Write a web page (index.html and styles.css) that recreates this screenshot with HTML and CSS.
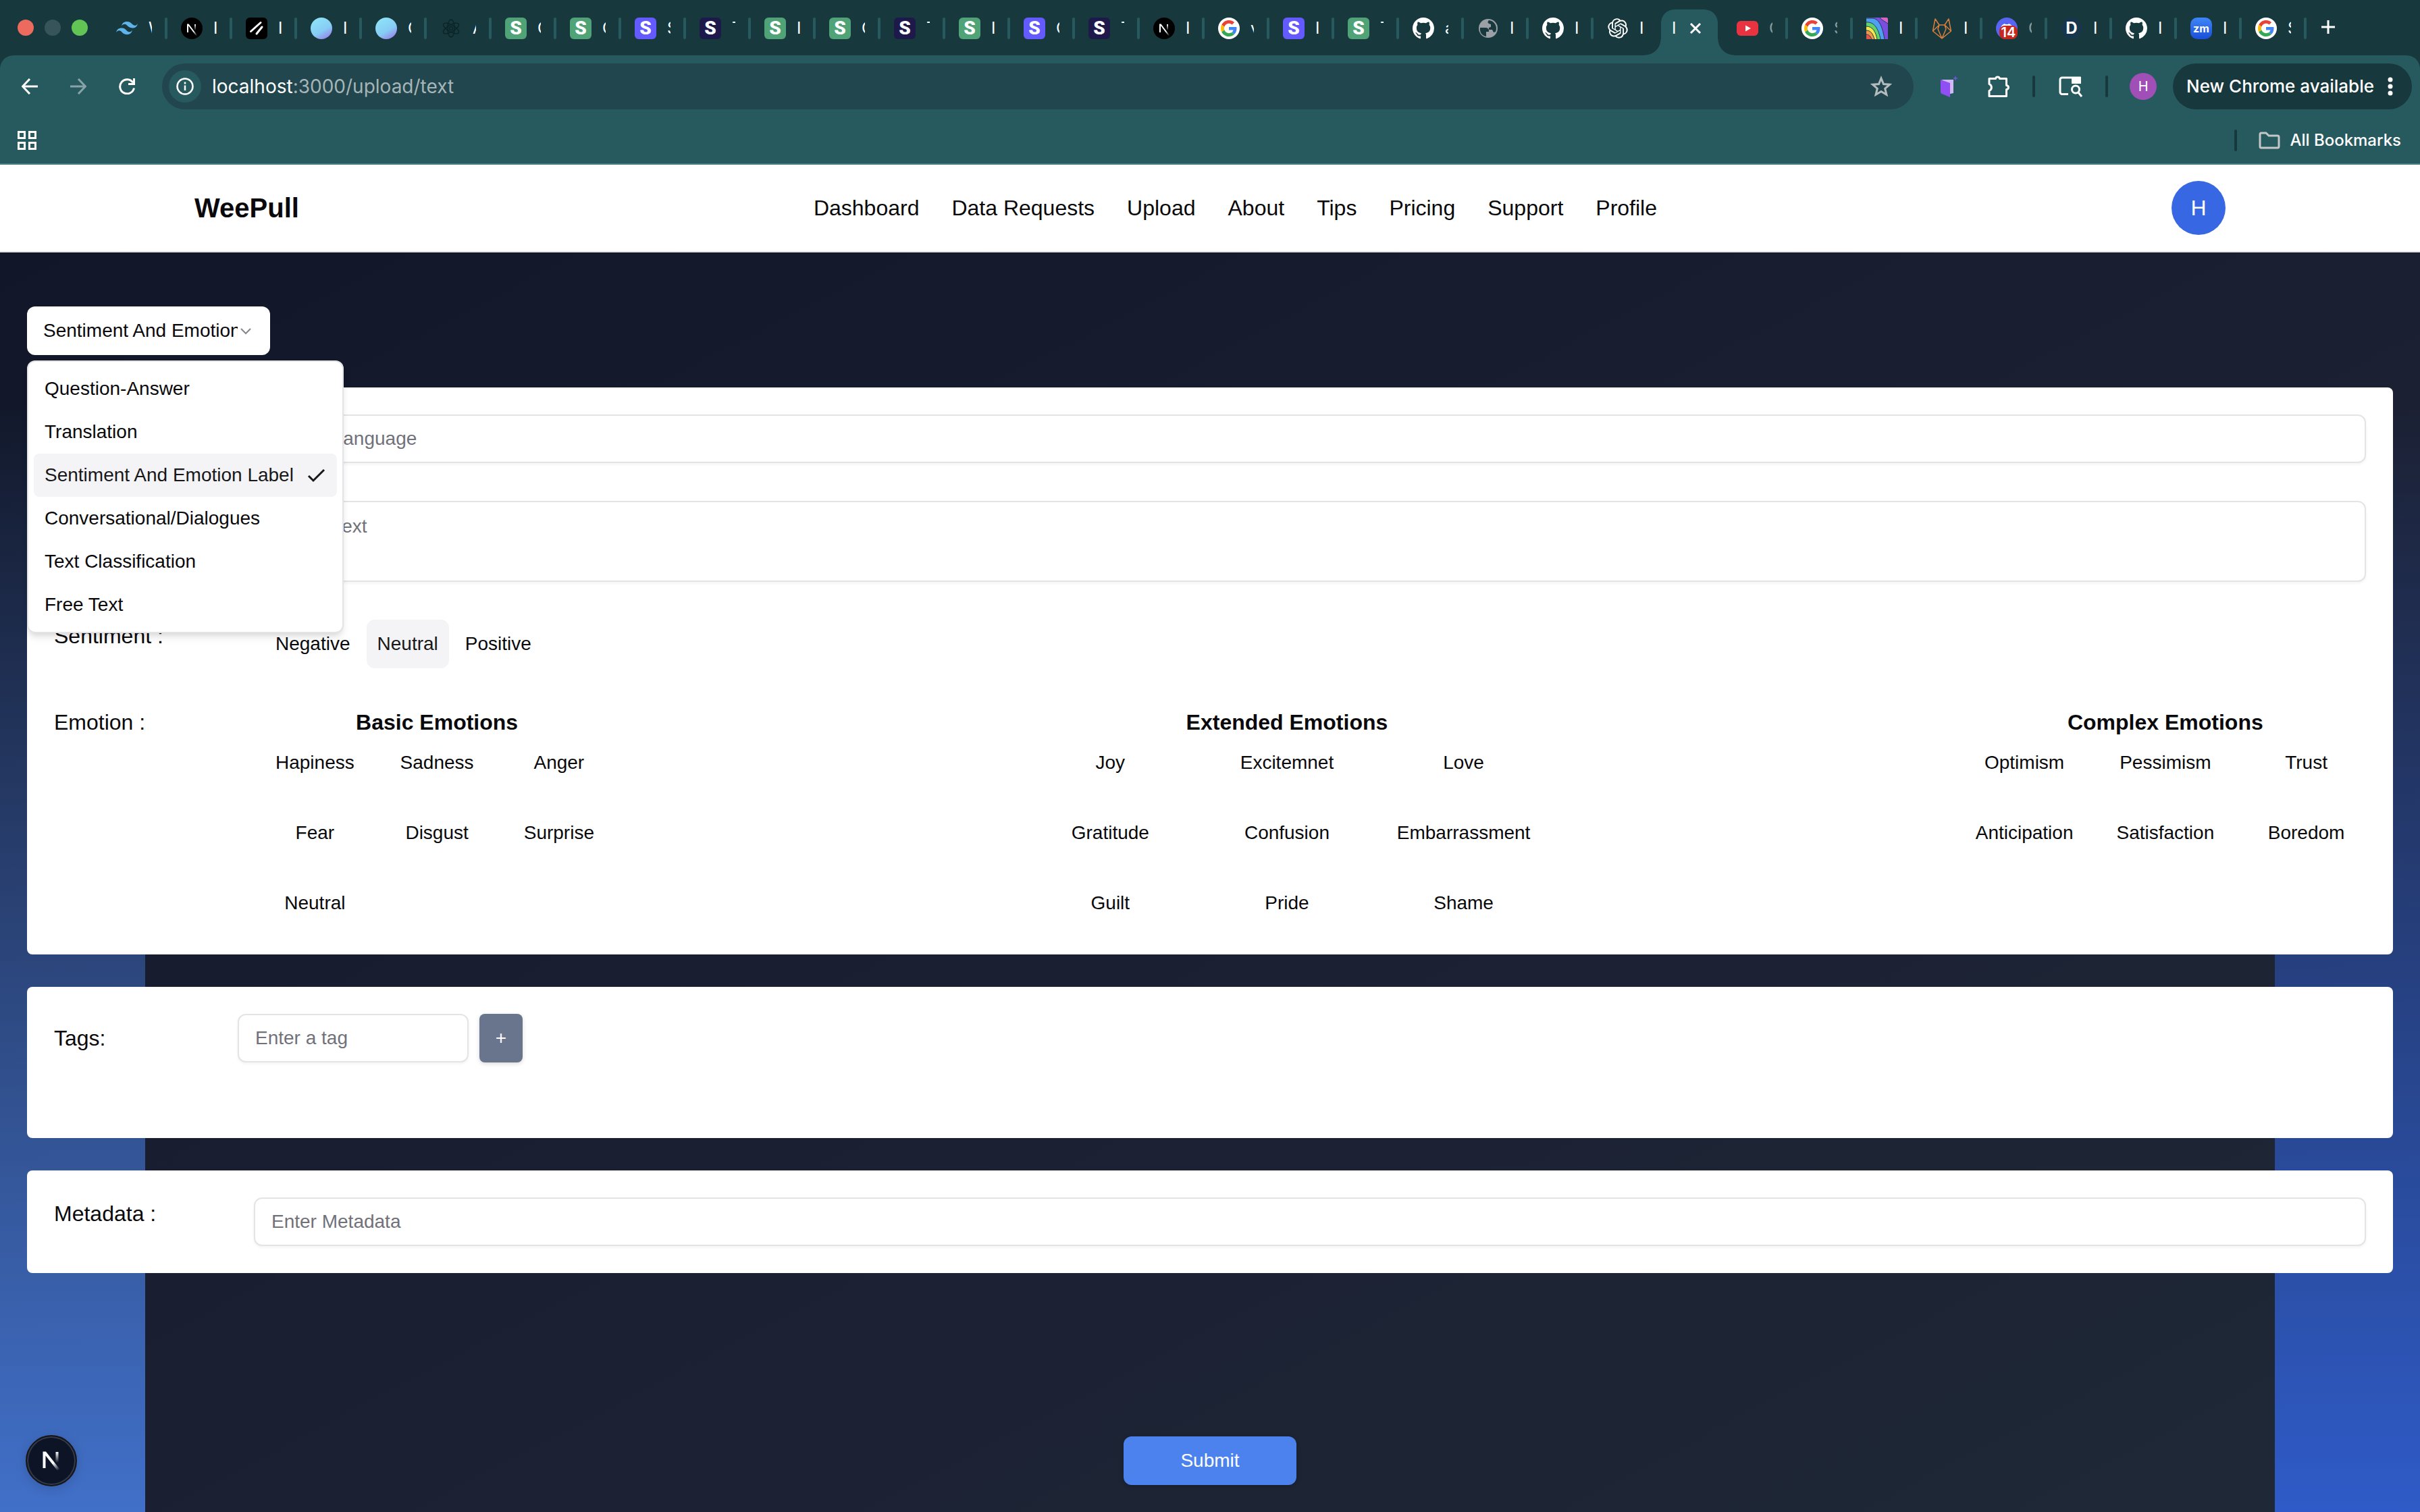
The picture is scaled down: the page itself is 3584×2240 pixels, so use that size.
FILE: index.html
```html
<!DOCTYPE html>
<html lang="en">
<head>
  <meta charset="UTF-8" />
  <meta name="viewport" content="width=device-width, initial-scale=1" />
  <title>WeePull - Upload Text</title>
  <link rel="stylesheet" href="styles.css">
</head>
<body>
  <svg width="0" height="0" class="sprite" aria-hidden="true">
    <defs>
      <linearGradient id="blob-fill" x1="0.2" y1="0" x2="0.8" y2="1">
        <stop offset="0" stop-color="#8fe3f7" />
        <stop offset="0.6" stop-color="#86cdf5" />
        <stop offset="1" stop-color="#9a7fe8" />
      </linearGradient>
      <linearGradient id="n-fade" x1="0" y1="0" x2="0" y2="1">
        <stop offset="0" stop-color="#fff" />
        <stop offset="1" stop-color="#fff" stop-opacity="0" />
      </linearGradient>
      <linearGradient id="n-diag" gradientUnits="userSpaceOnUse" x1="19" y1="20" x2="24" y2="26.500">
        <stop offset="0" stop-color="#fff" />
        <stop offset="1" stop-color="#fff" stop-opacity="0" />
      </linearGradient>
      <linearGradient id="badge-diag" gradientUnits="userSpaceOnUse" x1="19" y1="19" x2="27" y2="30">
        <stop offset="0" stop-color="#fff" />
        <stop offset="1" stop-color="#fff" stop-opacity="0" />
      </linearGradient>
    </defs>
    <symbol id="tailwind" viewBox="0 -10 54 54">
      <path fill="#5fb4ec" d="M27 0c-7.2 0-11.7 3.6-13.5 10.8 2.7-3.6 5.85-4.95 9.45-4.05 2.054.513 3.522 2.004 5.147 3.653C30.744 13.09 33.808 16.2 40.5 16.2c7.2 0 11.7-3.6 13.5-10.8-2.7 3.6-5.85 4.95-9.45 4.05-2.054-.513-3.522-2.004-5.147-3.653C36.756 3.11 33.692 0 27 0zM13.5 16.2C6.3 16.2 1.8 19.8 0 27c2.7-3.6 5.85-4.95 9.45-4.05 2.054.514 3.522 2.004 5.147 3.653C17.244 29.29 20.308 32.4 27 32.4c7.2 0 11.7-3.6 13.5-10.8-2.7 3.6-5.85 4.95-9.45 4.05-2.054-.513-3.522-2.004-5.147-3.653C23.256 19.31 20.192 16.2 13.5 16.2z" />
    </symbol>
    <symbol id="next" viewBox="0 0 32 32">
      <circle cx="16" cy="16" r="16" fill="#000" />
      <path d="M10 22V10.500h1L23.500 27" fill="none" stroke="url(#n-diag)" stroke-width="2" />
      <rect x="20" y="10" width="2" height="9" fill="url(#n-fade)" />
    </symbol>
    <symbol id="slashes" viewBox="0 0 32 32">
      <rect width="32" height="32" rx="6" fill="#000" />
      <path d="M7.500 20.500 22 7.500M16 24l8-10" stroke="#fff" stroke-width="3" stroke-linecap="round" />
    </symbol>
    <symbol id="blob" viewBox="0 0 32 32"><circle cx="16" cy="16" r="16" fill="url(#blob-fill)" /></symbol>
    <symbol id="atom" viewBox="0 0 32 32">
      <g fill="none" stroke="#0c2529" stroke-width="1.500">
        <ellipse cx="16" cy="16" rx="5" ry="13" />
        <ellipse cx="16" cy="16" rx="5" ry="13" transform="rotate(60 16 16)" />
        <ellipse cx="16" cy="16" rx="5" ry="13" transform="rotate(120 16 16)" />
        <circle cx="16" cy="16" r="2.500" />
      </g>
    </symbol>
    <symbol id="google" viewBox="0 0 32 32">
      <circle cx="16" cy="16" r="16" fill="#fff" />
      <g transform="translate(4 4) scale(.5)">
        <path fill="#ea4335" d="M24 9.500c3.540 0 6.710 1.220 9.210 3.600l6.850-6.850C35.900 2.380 30.470 0 24 0 14.620 0 6.510 5.380 2.560 13.220l7.980 6.190C12.430 13.720 17.740 9.500 24 9.500z" />
        <path fill="#4285f4" d="M46.980 24.550c0-1.570-.15-3.090-.38-4.550H24v9.020h12.940c-.58 2.960-2.260 5.480-4.780 7.180l7.730 6c4.510-4.180 7.090-10.360 7.090-17.650z" />
        <path fill="#fbbc05" d="M10.530 28.590c-.48-1.450-.76-2.990-.76-4.590s.27-3.140.76-4.590l-7.980-6.190C.92 16.460 0 20.120 0 24c0 3.880.92 7.540 2.560 10.780l7.970-6.190z" />
        <path fill="#34a853" d="M24 48c6.480 0 11.930-2.130 15.890-5.810l-7.730-6c-2.150 1.450-4.920 2.300-8.160 2.300-6.260 0-11.570-4.220-13.470-9.910l-7.980 6.190C6.510 42.620 14.620 48 24 48z" />
      </g>
    </symbol>
    <symbol id="github" viewBox="0 0 16 16">
      <path fill="#fff" d="M8 0C3.58 0 0 3.58 0 8c0 3.54 2.29 6.53 5.47 7.59.4.07.55-.17.55-.38 0-.19-.01-.82-.01-1.49-2.01.37-2.53-.49-2.69-.94-.09-.23-.48-.94-.82-1.13-.28-.15-.68-.52-.01-.53.63-.01 1.08.58 1.23.82.72 1.21 1.87.87 2.33.66.07-.52.28-.87.51-1.07-1.78-.2-3.64-.89-3.64-3.95 0-.87.31-1.59.82-2.15-.08-.2-.36-1.02.08-2.12 0 0 .67-.21 2.2.82.64-.18 1.32-.27 2-.27.68 0 1.36.09 2 .27 1.53-1.04 2.2-.82 2.2-.82.44 1.1.16 1.92.08 2.12.51.56.82 1.27.82 2.15 0 3.07-1.87 3.75-3.65 3.95.29.25.54.73.54 1.48 0 1.07-.01 1.93-.01 2.2 0 .21.15.46.55.38A8.013 8.013 0 0016 8c0-4.42-3.58-8-8-8z" />
    </symbol>
    <symbol id="globe" viewBox="0 0 32 32">
      <circle cx="16" cy="16" r="14" fill="#9aa0a6" />
      <path fill="#17383c" d="M4 15h8c3 0 5 2 5 4v2h-4v7c-6-1-10-6-9-13zM17 4c-2 2-2 4 0 5l3 1v4l-3 1v3h5l2 4 3-1c3-7-1-16-10-17z" />
    </symbol>
    <symbol id="openai" viewBox="-1 -1 26 26">
      <path fill="#fff" d="M22.2819 9.8211a5.9847 5.9847 0 0 0-.5157-4.9108 6.0462 6.0462 0 0 0-6.5098-2.9A6.0651 6.0651 0 0 0 4.9807 4.1818a5.9847 5.9847 0 0 0-3.9977 2.9 6.0462 6.0462 0 0 0 .7427 7.0966 5.98 5.98 0 0 0 .511 4.9107 6.051 6.051 0 0 0 6.5146 2.9001A5.9847 5.9847 0 0 0 13.2599 24a6.0557 6.0557 0 0 0 5.7718-4.2058 5.9894 5.9894 0 0 0 3.9977-2.9001 6.0557 6.0557 0 0 0-.7475-7.0729zm-9.022 12.6081a4.4755 4.4755 0 0 1-2.8764-1.0408l.1419-.0804 4.7783-2.7582a.7948.7948 0 0 0 .3927-.6813v-6.7369l2.02 1.1686a.071.071 0 0 1 .038.052v5.5826a4.504 4.504 0 0 1-4.4945 4.4944zm-9.6607-4.1254a4.4708 4.4708 0 0 1-.5346-3.0137l.142.0852 4.783 2.7582a.7712.7712 0 0 0 .7806 0l5.8428-3.3685v2.3324a.0804.0804 0 0 1-.0332.0615L9.74 19.9502a4.4992 4.4992 0 0 1-6.1408-1.6464zM2.3408 7.8956a4.485 4.485 0 0 1 2.3655-1.9728V11.6a.7664.7664 0 0 0 .3879.6765l5.8144 3.3543-2.0201 1.1685a.0757.0757 0 0 1-.071 0l-4.8303-2.7865A4.504 4.504 0 0 1 2.3408 7.8956zm16.5963 3.8558L13.1038 8.364 15.1192 7.2a.0757.0757 0 0 1 .071 0l4.8303 2.7913a4.4944 4.4944 0 0 1-.6765 8.1042v-5.6772a.79.79 0 0 0-.407-.667zm2.0107-3.0231l-.142-.0852-4.7735-2.7818a.7759.7759 0 0 0-.7854 0L9.409 9.2297V6.8974a.0662.0662 0 0 1 .0284-.0615l4.8303-2.7866a4.4992 4.4992 0 0 1 6.6802 4.66zM8.3065 12.863l-2.02-1.1638a.0804.0804 0 0 1-.038-.0567V6.0742a4.4992 4.4992 0 0 1 7.3757-3.4537l-.142.0805L8.704 5.459a.7948.7948 0 0 0-.3927.6813zm1.0976-2.3654l2.602-1.4998 2.6069 1.4998v2.9994l-2.5974 1.4997-2.6067-1.4997Z" />
    </symbol>
    <symbol id="youtube" viewBox="0 0 32 32">
      <rect y="5" width="32" height="22" rx="6" fill="#ea3340" />
      <path d="M13 11.500v9l8-4.500z" fill="#fff" />
    </symbol>
    <symbol id="rainbow" viewBox="0 0 32 32">
      <rect width="32" height="32" rx="2" fill="#d466c8" />
      <path fill="#7a4fe0" d="M0 0h20c3 4 8 6 12 9v23H0z" />
      <path fill="#4fa0ee" d="M0 1h10c10 2 14 14 17 31H0z" />
      <path fill="#62d36a" d="M0 7c12-1 18 10 21 25H0z" />
      <path fill="#f5e64b" d="M0 13c10 0 14 9 16 19H0z" />
      <path fill="#f0974a" d="M0 19c7 0 10 6 12 13H0z" />
      <path fill="#e2574c" d="M0 25c4 0 6 3 8 7H0z" />
      <path fill="none" stroke="#1c3a55" stroke-width="1" d="M20 0c3 4 8 6 12 9M0 1h10c10 2 14 14 17 31M0 7c12-1 18 10 21 25M0 13c10 0 14 9 16 19M0 19c7 0 10 6 12 13M0 25c4 0 6 3 8 7" />
    </symbol>
    <symbol id="fox" viewBox="0 0 32 32">
      <path fill="none" stroke="#d9803f" stroke-width="1.500" stroke-linejoin="round" d="M6 2 2.500 20 16 31l13.500-11L26 2l-6 9h-8zM12 11l-2 6 6 14 6-14-2-6M6 2l6 9-9.500 9M26 2l-6 9 9.500 9" />
    </symbol>
    <symbol id="discord" viewBox="0 0 32 32">
      <circle cx="16" cy="16" r="16" fill="#5865f2" />
      <path fill="#fff" d="M7 15c1-3 3-5 6-6l1 1h4l1-1c3 1 5 3 6 6z" />
    </symbol>
    <symbol id="hexagon" viewBox="0 0 32 32"><path fill="#16354f" d="M8 1h16l8 15-8 15H8L0 16z" /></symbol>
    <symbol id="next-n" viewBox="0 0 32 32">
      <path d="M5.500 27V4.500h1.500L27 30" fill="none" stroke="url(#badge-diag)" stroke-width="4" />
      <rect x="22.500" y="3" width="4" height="16" fill="url(#n-fade)" />
    </symbol>
  </svg>

  <div class="browser">
    <div class="tab-strip">
      <div class="lights">
        <span class="light red"></span>
        <span class="light idle"></span>
        <span class="light green"></span>
      </div>
      <div class="tabs">
        <button class="tab"><svg class="favicon"><use href="#tailwind" /></svg><span class="tab-title">W</span></button>
        <button class="tab"><svg class="favicon"><use href="#next" /></svg><span class="tab-title">I</span></button>
        <button class="tab"><svg class="favicon"><use href="#slashes" /></svg><span class="tab-title">I</span></button>
        <button class="tab"><svg class="favicon"><use href="#blob" /></svg><span class="tab-title">I</span></button>
        <button class="tab"><svg class="favicon"><use href="#blob" /></svg><span class="tab-title">C</span></button>
        <button class="tab"><svg class="favicon"><use href="#atom" /></svg><span class="tab-title">A</span></button>
        <button class="tab"><span class="favicon letter green">S</span><span class="tab-title">C</span></button>
        <button class="tab"><span class="favicon letter green">S</span><span class="tab-title">C</span></button>
        <button class="tab"><span class="favicon letter purple">S</span><span class="tab-title">S</span></button>
        <button class="tab"><span class="favicon letter navy">S</span><span class="tab-title">T</span></button>
        <button class="tab"><span class="favicon letter green">S</span><span class="tab-title">I</span></button>
        <button class="tab"><span class="favicon letter green">S</span><span class="tab-title">C</span></button>
        <button class="tab"><span class="favicon letter navy">S</span><span class="tab-title">T</span></button>
        <button class="tab"><span class="favicon letter green">S</span><span class="tab-title">I</span></button>
        <button class="tab"><span class="favicon letter purple">S</span><span class="tab-title">C</span></button>
        <button class="tab"><span class="favicon letter navy">S</span><span class="tab-title">T</span></button>
        <button class="tab"><svg class="favicon"><use href="#next" /></svg><span class="tab-title">I</span></button>
        <button class="tab"><svg class="favicon"><use href="#google" /></svg><span class="tab-title">v</span></button>
        <button class="tab"><span class="favicon letter purple">S</span><span class="tab-title">I</span></button>
        <button class="tab"><span class="favicon letter green">S</span><span class="tab-title">T</span></button>
        <button class="tab"><svg class="favicon"><use href="#github" /></svg><span class="tab-title">a</span></button>
        <button class="tab"><svg class="favicon"><use href="#globe" /></svg><span class="tab-title">I</span></button>
        <button class="tab"><svg class="favicon"><use href="#github" /></svg><span class="tab-title">I</span></button>
        <button class="tab last-before-active"><svg class="favicon"><use href="#openai" /></svg><span class="tab-title">I</span></button>
        <button class="tab active"><span class="tab-title">I</span><svg class="close" viewBox="0 0 20 20"><path d="m3 3 14 14M17 3 3 17" stroke="#fff" stroke-width="3" /></svg></button>
        <button class="tab"><svg class="favicon"><use href="#youtube" /></svg><span class="tab-title faded">C</span></button>
        <button class="tab"><svg class="favicon"><use href="#google" /></svg><span class="tab-title faded">S</span></button>
        <button class="tab"><svg class="favicon"><use href="#rainbow" /></svg><span class="tab-title">I</span></button>
        <button class="tab"><svg class="favicon"><use href="#fox" /></svg><span class="tab-title">I</span></button>
        <button class="tab"><span class="favicon badged"><svg class="favicon"><use href="#discord" /></svg><span class="count">14</span></span><span class="tab-title faded">C</span></button>
        <button class="tab"><span class="favicon badged"><svg class="favicon"><use href="#hexagon" /></svg><span class="hex-letter">D</span></span><span class="tab-title">I</span></button>
        <button class="tab"><svg class="favicon"><use href="#github" /></svg><span class="tab-title">I</span></button>
        <button class="tab"><span class="favicon letter zoom">zm</span><span class="tab-title">I</span></button>
        <button class="tab"><svg class="favicon"><use href="#google" /></svg><span class="tab-title">S</span></button>
      </div>
      <button class="new-tab" aria-label="New tab"><svg viewBox="0 0 20 20"><path d="M10 0v20M0 10h20" stroke="#fff" stroke-width="3" /></svg></button>
    </div>

    <div class="toolbar">
      <button class="nav-btn" aria-label="Back"><svg viewBox="0 0 24 24"><path d="M24 12H2M12 1 1.500 12 12 23" /></svg></button>
      <button class="nav-btn disabled" aria-label="Forward"><svg viewBox="0 0 24 24"><path d="M0 12h22M12 1l10.500 11L12 23" /></svg></button>
      <button class="nav-btn" aria-label="Reload"><svg viewBox="0 0 24 24"><path d="M22.500 14.500A10.500 10.500 0 1 1 21 6.500M22.500 0v8.500H14" /></svg></button>
      <div class="omnibox">
        <span class="site-info">
          <svg viewBox="0 0 26 26"><circle cx="13" cy="13" r="11.500" fill="none" stroke="#fff" stroke-width="2.500" /><path d="M13 11.500V19M13 6.500v3" stroke="#fff" stroke-width="2.500" /></svg>
        </span>
        <span class="url"><span class="host">localhost</span>:3000/upload/text</span>
        <svg class="star" viewBox="0 0 32 32"><path d="m16 4 3.500 8.500 9.200.700-7 6 2.200 9L16 23.400l-7.900 4.800 2.200-9-7-6 9.200-.700z" fill="none" stroke="#b4bcbe" stroke-width="3" /></svg>
      </div>
      <div class="extensions">
        <button class="ext-btn" aria-label="Extension">
          <svg viewBox="0 0 32 32"><path d="M8 6h17v20l-5 1z" fill="#d3b8f8" /><path d="M6 6l14 5v21L8 27a3 3 0 0 1-2-3z" fill="#8f4ff2" /><path d="m28 0 1 3 3 1-3 1-1 3-1-3-3-1 3-1z" fill="#7a4fe0" /></svg>
        </button>
        <button class="ext-btn" aria-label="Extensions">
          <svg viewBox="0 0 32 32"><path d="M2 4.500h9.500c.5-3.500 5.500-3.500 6 0H27.500v10c4 .500 4 5.500 0 6v10H2v-8c4.500-2 4.500-8 0-10z" fill="none" stroke="#fff" stroke-width="3" stroke-linejoin="round" /></svg>
        </button>
      </div>
      <span class="divider"></span>
      <button class="tool-btn" aria-label="Side search">
        <svg viewBox="0 0 36 32"><path d="M15 27.500H6a3 3 0 0 1-3-3V6a3 3 0 0 1 3-3h26v9" fill="none" stroke="#fff" stroke-width="3" /><path d="M20 2h14v10H20z" fill="#fff" /><circle cx="26" cy="20.500" r="5.500" fill="none" stroke="#fff" stroke-width="3" /><path d="m30 25 5 6" stroke="#fff" stroke-width="3" /></svg>
      </button>
      <span class="divider"></span>
      <button class="tool-btn" aria-label="Browser profile"><span class="browser-avatar">H</span></button>
      <button class="update-pill">New Chrome available
        <svg viewBox="0 0 8 28"><circle cx="4" cy="4" r="3.500" /><circle cx="4" cy="14" r="3.500" /><circle cx="4" cy="24" r="3.500" /></svg>
      </button>
    </div>

    <div class="bookmarks">
      <button class="apps" aria-label="Apps"><svg viewBox="0 0 28 28"><path d="M1.500 1.500h9v9h-9zM17.500 1.500h9v9h-9zM1.500 17.500h9v9h-9zM17.500 17.500h9v9h-9z" fill="none" stroke="#fff" stroke-width="3" /></svg></button>
      <span class="divider"></span>
      <button class="all-bookmarks">
        <svg viewBox="0 0 32 26"><path d="M2 4a2 2 0 0 1 2-2h7l4 4h13a2 2 0 0 1 2 2v14a2 2 0 0 1-2 2H4a2 2 0 0 1-2-2z" fill="none" stroke="#c3c7c8" stroke-width="3" /></svg>
        All Bookmarks
      </button>
    </div>
  </div>

  <header class="header">
    <div class="header-inner">
      <a href="#" class="brand">WeePull</a>
      <nav class="nav">
        <a href="#">Dashboard</a>
        <a href="#">Data Requests</a>
        <a href="#">Upload</a>
        <a href="#">About</a>
        <a href="#">Tips</a>
        <a href="#">Pricing</a>
        <a href="#">Support</a>
        <a href="#">Profile</a>
      </nav>
      <button class="avatar">H</button>
    </div>
  </header>

  <main class="page">
    <form class="upload-form">
      <div class="select">
        <select class="select-trigger" aria-label="Dataset type">
          <option>Question-Answer</option>
          <option>Translation</option>
          <option selected>Sentiment And Emotion Label</option>
          <option>Conversational/Dialogues</option>
          <option>Text Classification</option>
          <option>Free Text</option>
        </select>
        <svg class="chevron" viewBox="0 0 24 24"><path d="m5 9 7 7 7-7" fill="none" stroke="#85858b" stroke-width="2" /></svg>
        <ul class="select-menu" role="listbox">
          <li class="option" role="option">Question-Answer</li>
          <li class="option" role="option">Translation</li>
          <li class="option selected" role="option" aria-selected="true">Sentiment And Emotion Label
            <svg class="check" viewBox="0 0 28 28"><path d="m2 15 7 7L25 6" fill="none" stroke="#18181b" stroke-width="3" /></svg>
          </li>
          <li class="option" role="option">Conversational/Dialogues</li>
          <li class="option" role="option">Text Classification</li>
          <li class="option" role="option">Free Text</li>
        </ul>
      </div>

      <section class="card">
        <div class="row">
          <label for="language"></label>
          <input class="field" id="language" type="text" placeholder="Enter Language" aria-label="Language">
        </div>
        <div class="row">
          <label for="text"></label>
          <textarea class="field" id="text" placeholder="Enter Text" aria-label="Text"></textarea>
        </div>
        <div class="row">
          <span class="label">Sentiment :</span>
          <div class="toggles">
            <button type="button" class="toggle">Negative</button>
            <button type="button" class="toggle on">Neutral</button>
            <button type="button" class="toggle">Positive</button>
          </div>
        </div>
        <div class="row">
          <span class="label">Emotion :</span>
          <div class="emotions">
            <div class="emotion-group">
              <h3>Basic Emotions</h3>
              <div class="emotion-grid">
                <button type="button" class="toggle">Hapiness</button>
                <button type="button" class="toggle">Sadness</button>
                <button type="button" class="toggle">Anger</button>
                <button type="button" class="toggle">Fear</button>
                <button type="button" class="toggle">Disgust</button>
                <button type="button" class="toggle">Surprise</button>
                <button type="button" class="toggle">Neutral</button>
              </div>
            </div>
            <div class="emotion-group">
              <h3>Extended Emotions</h3>
              <div class="emotion-grid">
                <button type="button" class="toggle">Joy</button>
                <button type="button" class="toggle">Excitemnet</button>
                <button type="button" class="toggle">Love</button>
                <button type="button" class="toggle">Gratitude</button>
                <button type="button" class="toggle">Confusion</button>
                <button type="button" class="toggle">Embarrassment</button>
                <button type="button" class="toggle">Guilt</button>
                <button type="button" class="toggle">Pride</button>
                <button type="button" class="toggle">Shame</button>
              </div>
            </div>
            <div class="emotion-group">
              <h3>Complex Emotions</h3>
              <div class="emotion-grid">
                <button type="button" class="toggle">Optimism</button>
                <button type="button" class="toggle">Pessimism</button>
                <button type="button" class="toggle">Trust</button>
                <button type="button" class="toggle">Anticipation</button>
                <button type="button" class="toggle">Satisfaction</button>
                <button type="button" class="toggle">Boredom</button>
              </div>
            </div>
          </div>
        </div>
      </section>

      <section class="card tags-card">
        <div class="row tags-row">
          <label for="tag">Tags:</label>
          <div class="tag-entry">
            <input class="field" id="tag" type="text" placeholder="Enter a tag">
            <button type="button" class="add-tag">+</button>
          </div>
        </div>
      </section>

      <section class="card">
        <div class="row metadata-row">
          <label for="metadata">Metadata :</label>
          <input class="field" id="metadata" type="text" placeholder="Enter Metadata">
        </div>
      </section>

      <button type="submit" class="submit">Submit</button>
    </form>
  </main>

  <button class="dev-badge" aria-label="Dev tools"><svg viewBox="0 0 32 32"><use href="#next-n" /></svg></button>
</body>
</html>
```
FILE: styles.css
```css
* {
  margin: 0;
  padding: 0;
  box-sizing: border-box;
}

body {
  min-height: 100vh;
  display: flex;
  flex-direction: column;
  font-family: "Liberation Sans", Arial, sans-serif;
  font-size: 32px;
  line-height: 48px;
  color: #09090b;
}

button {
  font: inherit;
  color: inherit;
  background: none;
  border: none;
  cursor: pointer;
}

a {
  color: inherit;
  text-decoration: none;
}

svg {
  display: block;
  flex-shrink: 0;
}

.sprite {
  position: absolute;
}

/* Browser window */

.browser {
  background: #17383c;
  color: #fff;
  font-family: Inter, sans-serif;
}

.tab-strip {
  display: flex;
  height: 82px;
  padding-left: 26px;
}

.lights {
  display: flex;
  align-items: center;
  gap: 16px;
  margin-right: 22px;
}

.light {
  width: 24px;
  height: 24px;
  border-radius: 50%;
}

.light.red { background: #ec6a5e; }
.light.idle { background: #37545a; }
.light.green { background: #61c454; }

.tabs {
  display: flex;
}

.tab {
  display: flex;
  align-items: center;
  width: 96px;
  height: 84px;
  padding-left: 20px;
  gap: 16px;
  font-size: 24px;
  line-height: 32px;
}

.tab::after {
  content: "";
  width: 4px;
  height: 32px;
  margin-left: auto;
  border-radius: 2px;
  background: #265a5f;
}

.tab-title {
  width: 5px;
  overflow: hidden;
  text-align: left;
}

.tab-title.faded {
  opacity: 0.5;
}

.last-before-active::after {
  display: none;
}

.tab.active {
  position: relative;
  align-self: flex-end;
  width: 84px;
  height: 68px;
  margin: 0 8px 0 4px;
  padding: 0 0 12px 16px;
  gap: 20px;
  border-radius: 20px 20px 0 0;
  background: #265a5f;
}

.tab.active::before,
.tab.active::after {
  content: "";
  position: absolute;
  bottom: 0;
  width: 24px;
  height: 24px;
  border-radius: 0;
}

.tab.active::before {
  left: -24px;
  background: radial-gradient(circle at 0 0, transparent 23px, #265a5f 24px);
}

.tab.active::after {
  right: -24px;
  background: radial-gradient(circle at 100% 0, transparent 23px, #265a5f 24px);
}

.close {
  width: 20px;
  height: 20px;
}

.favicon {
  width: 32px;
  height: 32px;
  flex-shrink: 0;
}

.letter {
  border-radius: 6px;
  font-family: Roboto, sans-serif;
  font-size: 28px;
  font-weight: 900;
  text-align: center;
}

.letter.green { background: #50a377; }
.letter.purple { background: #635bff; }
.letter.navy { background: #1d1a4b; }

.letter.zoom {
  border-radius: 10px;
  background: linear-gradient(#3f86f7, #1a4fd8);
  font-family: Inter, sans-serif;
  font-size: 16px;
  font-weight: 700;
}

.badged {
  position: relative;
}

.count {
  position: absolute;
  right: 0;
  bottom: 0;
  width: 27px;
  height: 20px;
  border-radius: 8px;
  background: #c5281c;
  font-size: 20px;
  line-height: 20px;
  font-weight: 600;
}

.hex-letter {
  position: absolute;
  inset: 0;
  font-size: 24px;
  font-weight: 700;
}

.new-tab {
  width: 64px;
  height: 80px;
  padding-left: 22px;
}

.new-tab svg {
  width: 20px;
  height: 20px;
}

.toolbar {
  display: flex;
  align-items: center;
  padding: 12px 12px 12px 8px;
  background: #265a5f;
  border-radius: 20px 20px 0 0;
}

.nav-btn {
  display: flex;
  justify-content: center;
  width: 72px;
}

.nav-btn svg {
  width: 24px;
  height: 24px;
  fill: none;
  stroke: #fff;
  stroke-width: 3px;
}

.nav-btn.disabled {
  opacity: 0.45;
}

.omnibox {
  flex: 1;
  display: flex;
  align-items: center;
  height: 68px;
  margin-left: 16px;
  padding: 0 32px 0 10px;
  border-radius: 34px;
  background: #21464d;
}

.site-info {
  display: flex;
  align-items: center;
  justify-content: center;
  width: 48px;
  height: 48px;
  margin-right: 16px;
  border-radius: 50%;
  background: #265a5f;
}

.site-info svg {
  width: 26px;
  height: 26px;
}

.url {
  flex: 1;
  font-size: 28px;
  color: #a6b5b8;
}

.host {
  color: #fff;
}

.star {
  width: 32px;
  height: 32px;
}

.extensions {
  display: flex;
  margin-left: 12px;
}

.ext-btn,
.tool-btn {
  display: flex;
  align-items: center;
  justify-content: center;
  width: 76px;
}

.tool-btn {
  width: 80px;
}

.ext-btn svg {
  width: 32px;
  height: 32px;
}

.tool-btn svg {
  width: 36px;
  height: 32px;
}

.divider {
  width: 4px;
  height: 32px;
  margin: 0 12px;
  border-radius: 2px;
  background: #17383c;
}

.browser-avatar {
  width: 40px;
  height: 40px;
  border-radius: 50%;
  background: #9f4fb5;
  font-size: 20px;
  line-height: 40px;
}

.update-pill {
  display: flex;
  align-items: center;
  gap: 20px;
  height: 68px;
  margin-left: 4px;
  padding: 0 28px 0 20px;
  border-radius: 34px;
  background: #17383c;
  font-size: 26px;
  font-weight: 500;
}

.update-pill svg {
  width: 8px;
  height: 28px;
  fill: #fff;
}

.bookmarks {
  display: flex;
  align-items: center;
  height: 70px;
  padding: 0 28px 0 26px;
  background: #265a5f;
  border-bottom: 2px solid #4a7d83;
}

.bookmarks .divider {
  margin: 0 32px 0 auto;
}

.apps svg {
  width: 28px;
  height: 28px;
}

.all-bookmarks {
  display: flex;
  align-items: center;
  gap: 14px;
  font-size: 24px;
  font-weight: 500;
}

.all-bookmarks svg {
  width: 32px;
  height: 26px;
}

/* Site header */

.header {
  background: #fff;
  border-bottom: 2px solid #e4e4e7;
}

.header-inner {
  display: flex;
  align-items: center;
  justify-content: space-between;
  max-width: 3072px;
  height: 128px;
  margin: 0 auto;
  padding: 0 32px;
}

.brand {
  font-size: 40px;
  font-weight: 700;
}

.nav {
  display: flex;
  gap: 48px;
}

.avatar {
  width: 80px;
  height: 80px;
  border-radius: 50%;
  background: #3767e3;
  color: #fff;
}

/* Upload page */

.page {
  flex: 1;
  display: flex;
  background:
    linear-gradient(to bottom, transparent 12%, #4170c9) left / 6% 100% no-repeat,
    linear-gradient(to bottom, transparent 12%, #2f5bc8) right / 6% 100% no-repeat,
    linear-gradient(to bottom right, #111729, #1b2032 55%, #1f2937);
}

.upload-form {
  flex: 1;
  display: flex;
  flex-direction: column;
  gap: 48px;
  padding: 80px 40px 40px;
}

.select {
  position: relative;
  align-self: flex-start;
  width: 360px;
}

.select-trigger {
  display: block;
  appearance: none;
  width: 100%;
  height: 72px;
  padding: 0 48px 0 24px;
  border: none;
  border-radius: 12px;
  background: #fff;
  color: #09090b;
  font: inherit;
  font-size: 28px;
}

.chevron {
  position: absolute;
  top: 24px;
  right: 24px;
  width: 24px;
  height: 24px;
}

.select-menu {
  position: absolute;
  top: calc(100% + 8px);
  left: 0;
  z-index: 10;
  padding: 8px;
  list-style: none;
  background: #fff;
  border: 2px solid #e4e4e7;
  border-radius: 12px;
  box-shadow: 0 8px 12px -2px rgba(0, 0, 0, 0.1), 0 4px 8px -4px rgba(0, 0, 0, 0.1);
}

.option {
  position: relative;
  padding: 12px 64px 12px 16px;
  border-radius: 8px;
  font-size: 28px;
  line-height: 40px;
  white-space: nowrap;
}

.option.selected {
  background: #f4f4f6;
  color: #18181b;
}

.check {
  position: absolute;
  top: 18px;
  right: 16px;
  width: 28px;
  height: 28px;
}

.card {
  display: flex;
  flex-direction: column;
  gap: 56px;
  padding: 40px;
  border-radius: 8px;
  background: #fff;
}

.row {
  display: grid;
  grid-template-columns: 272px 1fr;
  align-items: start;
  column-gap: 40px;
}

.field {
  display: block;
  width: 100%;
  height: 72px;
  padding: 0 24px;
  border: 2px solid #e4e4e7;
  border-radius: 12px;
  background: #fff;
  color: #09090b;
  box-shadow: 0 2px 4px rgba(0, 0, 0, 0.05);
  font: inherit;
  font-size: 28px;
  line-height: 40px;
}

.field::placeholder {
  color: #71717a;
}

textarea.field {
  height: 120px;
  padding: 16px 24px;
  resize: none;
}

.toggles {
  display: flex;
  gap: 8px;
}

.toggle {
  height: 72px;
  padding: 0 16px;
  border-radius: 12px;
  font-size: 28px;
}

.toggle.on {
  background: #f4f4f6;
  color: #18181b;
}

.emotions {
  display: flex;
  justify-content: space-between;
}

.emotion-group h3 {
  font-size: 32px;
  text-align: center;
}

.emotion-grid {
  display: grid;
  grid-template-columns: repeat(3, 1fr);
  gap: 32px;
}

.tags-card {
  min-height: 224px;
}

.tags-row {
  grid-template-columns: 232px 1fr;
  align-items: center;
}

.metadata-row {
  grid-template-columns: 256px 1fr;
}

.tag-entry {
  display: flex;
  gap: 16px;
}

.tag-entry .field {
  width: 342px;
}

.add-tag {
  width: 64px;
  height: 72px;
  border-radius: 8px;
  background: #69758c;
  box-shadow: 0 2px 6px rgba(0, 0, 0, 0.15);
  color: #fff;
  font-size: 28px;
}

.submit {
  align-self: center;
  width: 256px;
  height: 72px;
  margin-top: auto;
  border-radius: 12px;
  background: #4c82ee;
  box-shadow: 0 2px 6px rgba(0, 0, 0, 0.2);
  color: #fff;
  font-size: 28px;
}

.dev-badge {
  position: fixed;
  left: 38px;
  bottom: 38px;
  display: flex;
  align-items: center;
  justify-content: center;
  width: 76px;
  height: 76px;
  border: 2px solid #171717;
  border-radius: 50%;
  background: #0d1426;
  box-shadow: inset 0 0 0 2px #343b4c, 0 4px 16px rgba(0, 0, 0, 0.15);
}

.dev-badge svg {
  width: 32px;
  height: 32px;
}
```
